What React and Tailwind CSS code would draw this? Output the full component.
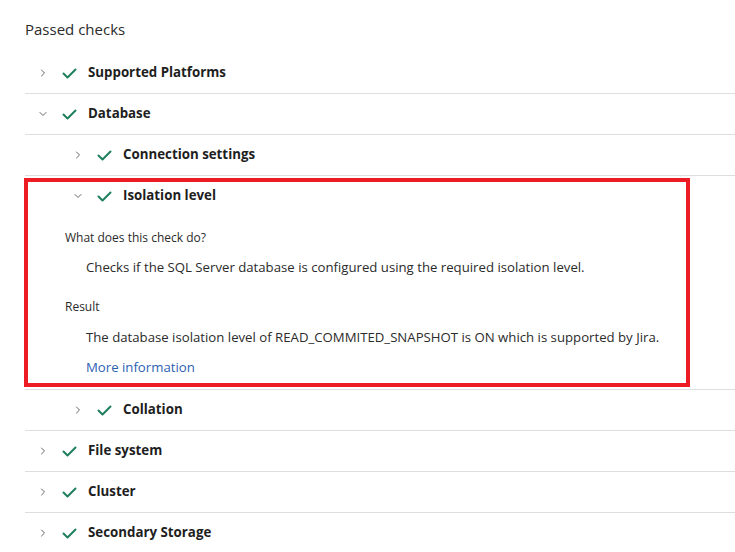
import { ChevronRight, ChevronDown } from "lucide-react";

const font = { fontFamily: '"Open Sans", "Noto Sans", sans-serif' };

function Check() {
  return (
    <svg width="15" height="11" viewBox="0 0 15 11" className="shrink-0">
      <path d="M1.5 5.5 L5.5 9.5 L13.5 1.5" fill="none" stroke="#1f7f5c" strokeWidth="2" strokeLinecap="round" strokeLinejoin="round" />
    </svg>
  );
}

function RowHead({ title, open, nested }) {
  const Icon = open ? ChevronDown : ChevronRight;
  return (
    <div className={`flex items-center h-[40px] ${nested ? "pl-[47px]" : "pl-[12px]"}`}>
      <Icon size={12} strokeWidth={2} className="text-[#666] shrink-0" />
      <span className="ml-[13px]"><Check /></span>
      <span className="ml-[11px] text-[13.3px] font-bold text-[#1e1e1e]">{title}</span>
    </div>
  );
}

function Row({ title, open, nested }) {
  return (
    <div className="border-b border-[#dedede]">
      <RowHead title={title} open={open} nested={nested} />
    </div>
  );
}

export default function App() {
  return (
    <div className="min-h-screen bg-white pl-[25px] pt-[19px]" style={font}>
      <h2 className="text-[15px] leading-[20px] text-[#2b2b2b] mb-[14px]">Passed checks</h2>

      <Row title="Supported Platforms" />
      <Row title="Database" open />
      <Row title="Connection settings" nested />

      {/* expanded check with its details */}
      <div className="border-b border-[#dedede] pt-[2px] pb-[2px]">
        <div className="w-[666px] -ml-px border-4 border-[#ed1c24] pb-[6px]">
          <div className="flex items-center h-[28px] pl-[44px]">
            <ChevronDown size={12} strokeWidth={2} className="text-[#666] shrink-0" />
            <span className="ml-[13px]"><Check /></span>
            <span className="ml-[11px] text-[13.3px] font-bold text-[#1e1e1e]">Isolation level</span>
          </div>
          <div className="pl-[37px] mt-[20px]">
            <div className="text-[12px] leading-[16px] text-[#2b2b2b]">What does this check do?</div>
            <div className="pl-[21px] mt-[11px] text-[13.2px] leading-[20px] text-[#2b2b2b]">
              Checks if the SQL Server database is configured using the required isolation level.
            </div>
            <div className="mt-[22px] text-[12px] leading-[16px] text-[#2b2b2b]">Result</div>
            <div className="pl-[21px] mt-[12px] text-[13.2px] leading-[20px] text-[#2b2b2b]">
              The database isolation level of READ_COMMITED_SNAPSHOT is ON which is supported by Jira.
            </div>
            <div className="pl-[21px] mt-[10px] text-[13.2px] leading-[20px]">
              <a className="text-[#2d5fb3]">More information</a>
            </div>
          </div>
        </div>
      </div>

      <Row title="Collation" nested />
      <Row title="File system" />
      <Row title="Cluster" />
      <Row title="Secondary Storage" />
    </div>
  );
}
